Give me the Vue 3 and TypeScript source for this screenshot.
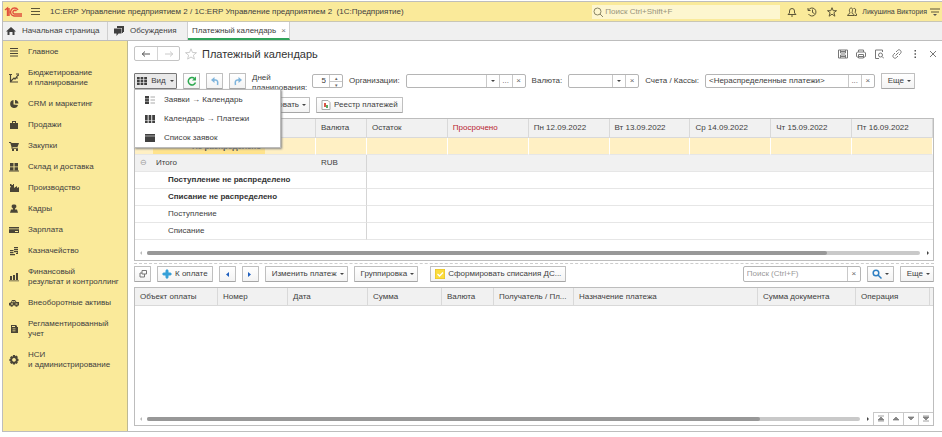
<script setup lang="ts">
import { ref } from 'vue'

interface Section { icon: string; lines: string[] }

const sections: Section[] = [
  { icon: 'M1 1.500h8M1 4h8M1 6.500h8M1 9h8', lines: ['Главное'] },
  { icon: 'M1.500 2v7H9M2 8l3-3 1 1 3-4M0 1.500h3M7 1h3v2M7 5h2', lines: ['Бюджетирование', 'и планирование'] },
  { icon: 'pie', lines: ['CRM и маркетинг'] },
  { icon: 'bag', lines: ['Продажи'] },
  { icon: 'cart', lines: ['Закупки'] },
  { icon: 'boxes', lines: ['Склад и доставка'] },
  { icon: 'factory', lines: ['Производство'] },
  { icon: 'person', lines: ['Кадры'] },
  { icon: 'card', lines: ['Зарплата'] },
  { icon: 'coins', lines: ['Казначейство'] },
  { icon: 'bars', lines: ['Финансовый', 'результат и контроллинг'] },
  { icon: 'car', lines: ['Внеоборотные активы'] },
  { icon: 'book', lines: ['Регламентированный', 'учет'] },
  { icon: 'gear', lines: ['НСИ', 'и администрирование'] },
]

const solid: Record<string, string> = {
  pie: 'M4.500 1A4 4 0 1 0 9 6L4.500 5.500zM6 1v3.500h3.500A4 4 0 0 0 6 1z',
  bag: 'M1 3h2V1h4v2h2v6H1zM4 2v1h2V2z',
  cart: 'M0 1h2l.5 1H10L8.500 6H3.500v.8H9v1H2.500V6L1.300 2H0zM3 8h2v2H3zM7 8h2v2H7z',
  boxes: 'M1 1h3.500v3.500H1zM5.500 1H9v3.500H5.500zM1 5.200h3.500v3H1zM5.500 5.200H9v3H5.500zM0 8.500h10v1H0z',
  factory: 'M1 1h1.500v1H4V1h1v4l3-2v2l2-1v5H1V5l1-2H1z',
  person: 'M5 .5a2 2 0 0 1 1.200 3.800L6 5.500h2L9 8.800H1L2 5.500h2l-.2-1.200A2 2 0 0 1 5 .5z',
  card: 'M0 2h10v1.500H0zM0 4.300h10V8H0zM6 6v1h3V6z',
  coins: 'M5 1h4v1.200H5zM5 3h4v1.200H5zM5 5h4v1.200H5zM1 4h3.500v1.200H1zM1 6h3.500v1.200H1zM1 8h5v1.200H1zM8 6h1v2H7V7h1z',
  bars: 'M1 4h2v4H1zM4 3h2v5H4zM7 1h2v7H7zM0 8.500h10v.8H0z',
  car: 'M3 2h3l1.500 2H10v3.500H8.800a1.300 1.300 0 0 1-2.600 0H4a1.300 1.300 0 0 1-2.600 0H0V5l2-.8zM3.500 3L3 4.300h1.500V3zM5.300 3v1.300h1.200L5.800 3zM2 5.500v1h2v-1zM6.500 5.500v1h2v-1z',
  book: 'M2 1h5l1 1v1h1v6H2zM3 2v1h3V2zM3.500 4.500v.8h3v-.8zM3.500 6.500v.8h3v-.8z',
  gear: 'M4 0h2l.3 1.300 1.200-.7 1.400 1.400-.7 1.200L9.500 4v2l-1.300.4.7 1.200-1.400 1.400-1.200-.7L6 9.600H4l-.4-1.300-1.200.7L1 7.600l.7-1.200L.4 6V4l1.300-.4L1 2.400 2.400 1l1.200.7zM5 3a1.900 1.900 0 1 0 .01 0z',
}

const views = [
  { label: 'Заявки → Календарь', icon: 'list' },
  { label: 'Календарь → Платежи', icon: 'grid' },
  { label: 'Список заявок', icon: 'rows' },
]

const days = ref(5)
const account = ref('<Нераспределенные платежи>')

const planColumns = ['', 'Валюта', 'Остаток', 'Просрочено', 'Пн 12.09.2022', 'Вт 13.09.2022', 'Ср 14.09.2022', 'Чт 15.09.2022', 'Пт 16.09.2022']
const planRows = [
  { label: 'Поступление не распределено', bold: true },
  { label: 'Списание не распределено', bold: true },
  { label: 'Поступление', bold: false },
  { label: 'Списание', bold: false },
]
const payColumns = ['Объект оплаты', 'Номер', 'Дата', 'Сумма', 'Валюта', 'Получатель / Пл...', 'Назначение платежа', 'Сумма документа', 'Операция', '']
const pagers = [
  { name: 'В начало', path: 'M2 2h6M5 3L2 6h6zM2 7h6' },
  { name: 'Вверх', path: 'M5 3L2 6h6z' },
  { name: 'Вниз', path: 'M2 3h6L5 6z' },
  { name: 'В конец', path: 'M2 2h6M2 3h6L5 6zM2 7h6' },
]
</script>

<template>
  <div class="window">
    <header class="titlebar">
      <svg class="logo" viewBox="0 0 18 12" aria-label="1С"><path d="M1 4l2.500-2v8M5 2v8M14 4A4 4 0 1 0 10 10h8M12.500 5A2 2 0 1 0 10 8h8" /></svg>
      <button class="ghost" aria-label="Меню"><svg class="ic" viewBox="0 0 10 10"><path d="M1 1.500h9M1 4.500h9M1 7.500h9" /></svg></button>
      <span class="app-name">1C:ERP Управление предприятием 2 / 1C:ERP Управление предприятием 2 &nbsp;(1С:Предприятие)</span>
      <label class="global-search">
        <svg class="ic" viewBox="0 0 10 10"><circle cx="4.500" cy="4.500" r="3.500" /><path d="M7 7l3 3" /></svg>
        <input type="text" placeholder="Поиск Ctrl+Shift+F" aria-label="Поиск" />
      </label>
      <nav class="top-icons">
        <button class="ghost" aria-label="Уведомления"><svg class="ic" viewBox="0 0 10 10"><path d="M1 7.500h8L7.500 6V4a2.500 2.500 0 0 0-5 0v2zM4 9h2" /></svg></button>
        <button class="ghost" aria-label="История"><svg class="ic" viewBox="0 0 10 10"><path d="M1.500 3A4 4 0 1 1 1.500 7M1 1v2.500h2.500M5.500 2.500V5.500l2 1" /></svg></button>
        <button class="ghost" aria-label="Избранное"><svg class="ic" viewBox="0 0 10 10"><path d="M5 .7l1.200 3h3.300L6.900 5.700l1 3.500L5 7.200 2.100 9.200l1-3.500L.5 3.700h3.300z" /></svg></button>
        <button class="ghost" aria-label="Пользователь"><svg class="ic" viewBox="0 0 10 10"><path d="M.5 8.500C.5 7 3 7 3 6S2 4.500 2.500 2.500s3-2 3 0S5 5 5 6s2.500 1 2.500 2.500zM6.500 1.500c2-.5 2.500 1 2 2.500s-.5 2 1 3v1.500H8" /></svg></button>
      </nav>
      <a class="user" href="#">Ликушина Виктория</a>
      <button class="ghost" aria-label="Настройки"><svg class="ic" viewBox="0 0 10 10"><path d="M0 2h10M1 5h8" /><path class="fill" d="M3 7h4L5 9z" /></svg></button>
    </header>

    <nav class="tabs">
      <a class="tab home" href="#"><svg class="ic dark" viewBox="0 0 10 10"><path class="fill" d="M5 1l5 4.500H8.500V9h-2V6h-3v3h-2V5.500H0z" /></svg>Начальная страница</a>
      <a class="tab talk" href="#"><svg class="ic dark" viewBox="0 0 10 10"><path class="fill" d="M3 0h7v6H9v1H8V2H3zM0 2.500h7.500V7.500H4.500L2.500 10V7.500H0z" /></svg>Обсуждения</a>
      <a class="tab active" href="#">Платежный календарь <span class="x">×</span></a>
    </nav>

    <div class="body">
      <aside class="sidebar">
        <a v-for="s in sections" :key="s.lines[0]" href="#" class="section">
          <svg class="sec-icon" viewBox="0 0 10 10">
            <path v-if="solid[s.icon]" class="solid" fill-rule="evenodd" :d="solid[s.icon]" />
            <path v-else class="line" :d="s.icon" />
          </svg>
          <span><template v-for="(l, i) in s.lines" :key="l"><br v-if="i > 0" />{{ l }}</template></span>
        </a>
      </aside>

      <main class="main">
        <div class="heading">
          <div class="history">
            <button aria-label="Назад"><svg class="ic arrow" viewBox="0 0 10 10"><path d="M1 5h8M4 2.500L1.300 5 4 7.500" /></svg></button>
            <button aria-label="Вперед"><svg class="ic arrow off" viewBox="0 0 10 10"><path d="M1 5h8M6 2.500L8.700 5 6 7.500" /></svg></button>
          </div>
          <svg class="star" viewBox="0 0 12 12"><path d="M6 .8l1.500 3.700 4 .2-3.100 2.500 1 3.900L6 9l-3.400 2.100 1-3.900L.5 4.700l4-.2z" /></svg>
          <h1>Платежный календарь</h1>
          <div class="form-tools">
            <button class="ghost" aria-label="Сохранить"><svg class="ic" viewBox="0 0 10 10"><path d="M.5 1h9v8h-9zM2.500 1v3h5V1M2.500 9V6h5v3M3 2.500h4M3 7.500h4" /></svg></button>
            <button class="ghost" aria-label="Печать"><svg class="ic" viewBox="0 0 10 10"><path d="M2.500 3V1h5v2M2.500 8.500l-2-1V4l1-1h7l1 1v3.500l-2 1M2.500 5.500h5V9h-5zM3 7.500h4" /></svg></button>
            <button class="ghost" aria-label="Просмотр"><svg class="ic" viewBox="0 0 10 10"><path d="M8.500 3V1h-7v8.500H5" /><circle cx="6.500" cy="6" r="2" /><path d="M8 7.500l2 2" /></svg></button>
            <button class="ghost" aria-label="Ссылка"><svg class="ic" viewBox="0 0 10 10"><path d="M4 3l1.500-1.500C7-.5 10.500 2 8.500 4.500L7 6M6 7L4.500 8.500C3 10.500-.5 8 1.500 5.500L3 4M3.500 6.500l3-3" /></svg></button>
            <button class="ghost" aria-label="Действия"><svg class="ic" viewBox="0 0 10 10"><path class="fill" d="M4.500 1h1.500v1.500H4.500zM4.500 4.300h1.500v1.500H4.500zM4.500 7.600h1.500v1.500H4.500z" /></svg></button>
            <button class="ghost" aria-label="Закрыть"><svg class="ic" viewBox="0 0 10 10"><path d="M2 2l6 6M8 2L2 8" /></svg></button>
          </div>
        </div>

        <div class="filters">
          <div class="menu-host">
            <button class="btn view-btn"><svg class="ic dark" viewBox="0 0 10 10"><path class="fill" d="M0 1h2.700v8H0zM3.600 1h2.700v8H3.600zM7.200 1H10v8H7.200z" /><path class="gap" d="M0 3.500h10M0 6.500h10" /></svg>Вид <i class="caret"></i></button>
            <div class="menu" role="menu">
              <button v-for="v in views" :key="v.label" role="menuitem">
                <svg class="ic dark" viewBox="0 0 10 10">
                  <template v-if="v.icon === 'list'"><path class="fill" d="M0 1h4v8H0z" /><path class="faint" d="M5.500 2H10M5.500 5H10M5.500 8H10" /><path class="gap" d="M0 3.700h4M0 6.300h4" /></template>
                  <template v-else-if="v.icon === 'grid'"><path class="fill" d="M0 1h2.700v8H0zM3.600 1h2.700v8H3.600zM7.200 1H10v8H7.200z" /><path class="gap" d="M0 6.500h10" /></template>
                  <template v-else><path class="fill" d="M0 1h10v8H0z" /><path class="faint" d="M0 3h10" /></template>
                </svg>{{ v.label }}
              </button>
            </div>
          </div>
          <button class="btn square" aria-label="Обновить"><svg class="ic green" viewBox="0 0 10 10"><path d="M8.500 6.500A3.700 3.700 0 1 1 7.500 2.500" /><path class="fill" d="M9 .5v4H5z" /></svg></button>
          <button class="btn square" aria-label="Отменить"><svg class="ic blue" viewBox="0 0 10 10"><path d="M3 4h2.500Q8.500 4 7.500 9" /><path class="fill" d="M4.500 1v6L1 4z" /></svg></button>
          <button class="btn square" aria-label="Повторить"><svg class="ic blue" viewBox="0 0 10 10"><path d="M7 4H4.500Q1.500 4 2.500 9" /><path class="fill" d="M5.500 1v6L9 4z" /></svg></button>
          <label class="days-label" for="days">Дней планирования:</label>
          <div class="field days"><input id="days" v-model="days" type="text" /><span class="spin"><button aria-label="Больше">▴</button><button aria-label="Меньше">▾</button></span></div>
          <label for="org">Организации:</label>
          <div class="field org"><input id="org" type="text" /><button aria-label="Список"><i class="caret"></i></button><button aria-label="Выбрать">...</button><button aria-label="Очистить">×</button></div>
          <label for="cur">Валюта:</label>
          <div class="field cur"><input id="cur" type="text" /><button aria-label="Список"><i class="caret"></i></button><button aria-label="Очистить">×</button></div>
          <label for="acc">Счета / Кассы:</label>
          <div class="field acc"><input id="acc" v-model="account" type="text" /><button aria-label="Выбрать">...</button><button aria-label="Очистить">×</button></div>
          <button class="btn">Еще <i class="caret"></i></button>
        </div>

        <div class="actions">
          <button class="btn form-btn">Сформировать <i class="caret"></i></button>
          <button class="btn with-icon"><svg class="ic" viewBox="0 0 10 10"><path class="paper" d="M1 .5h6l2 2v7H1z" /><path class="red" d="M3 3h2v4H3z" /><path class="grn" d="M5 5h2v3H5z" /></svg>Реестр платежей</button>
        </div>

        <section class="panel">
          <table class="plan">
            <colgroup><col class="c-name" /><col class="c-cur" /><col v-for="n in 7" :key="n" /></colgroup>
            <thead><tr><th v-for="(c, i) in planColumns" :key="i" :class="{ overdue: i === 3 }">{{ c }}</th></tr></thead>
            <tbody>
              <tr class="selected"><td><div class="cell-active">Не распределено</div></td><td v-for="n in 8" :key="n"></td></tr>
              <tr class="total"><td><span class="fold">⊖</span>Итого</td><td class="edge">RUB</td><td colspan="7"></td></tr>
              <tr v-for="r in planRows" :key="r.label"><td class="child" :class="{ bold: r.bold }">{{ r.label }}</td><td class="edge"></td><td colspan="7"></td></tr>
            </tbody>
          </table>
          <div class="scroll"><i class="tri left"></i><div class="track"><div class="thumb wide"></div></div><i class="tri right"></i></div>
        </section>

        <div class="splitter"></div>

        <div class="pay-tools">
          <button class="btn square" aria-label="Открыть"><svg class="ic open" viewBox="0 0 10 10"><path d="M4 1.500h4.500v3.500H4zM4 4H2v4h4.500V5" /></svg></button>
          <button class="btn with-icon"><svg class="ic sky" viewBox="0 0 10 10"><path class="fill" d="M3.500 1.500L5 0l1.500 1.500v2h2L10 5 8.500 6.500h-2v2L5 10 3.500 8.500v-2h-2L0 5l1.500-1.500h2z" /></svg>К оплате</button>
          <button class="btn square" aria-label="Назад"><svg class="ic navy" viewBox="0 0 10 10"><path class="fill" d="M7 3v5L4 5.500z" /></svg></button>
          <button class="btn square" aria-label="Вперед"><svg class="ic navy" viewBox="0 0 10 10"><path class="fill" d="M3 3v5l3-2.500z" /></svg></button>
          <button class="btn">Изменить платеж <i class="caret"></i></button>
          <button class="btn">Группировка <i class="caret"></i></button>
          <button class="btn with-icon make"><svg class="ic" viewBox="0 0 10 10"><path class="yellow" d="M0 0h10v10H0z" /><path class="check" d="M2.500 5l2 2 3.500-3.500" /></svg>Сформировать списания ДС...</button>
          <div class="field find"><input type="text" placeholder="Поиск (Ctrl+F)" aria-label="Поиск платежа" /><button aria-label="Очистить">×</button></div>
          <button class="btn with-icon" aria-label="Найти"><svg class="ic lens" viewBox="0 0 10 10"><circle cx="4" cy="4" r="2.800" /><path d="M6 6l3.500 3.500" /></svg><i class="caret"></i></button>
          <button class="btn">Еще <i class="caret"></i></button>
        </div>

        <section class="panel pay-panel">
          <table class="pay">
            <colgroup><col v-for="(c, i) in payColumns" :key="i" :class="'p' + i" /></colgroup>
            <thead><tr><th v-for="(c, i) in payColumns" :key="i">{{ c }}</th></tr></thead>
          </table>
          <div class="pay-foot">
            <div class="scroll"><i class="tri left"></i><div class="track"><div class="thumb"></div></div><i class="tri right"></i></div>
            <div class="pager"><button v-for="p in pagers" :key="p.name" :aria-label="p.name"><svg class="ic" viewBox="0 0 10 10"><path :d="p.path" /></svg></button></div>
          </div>
        </section>
      </main>
    </div>
  </div>
</template>

<style>
body { margin: 0; background: #fff; }
</style>

<style scoped>
.window, .window * { box-sizing: border-box; }
.window {
  font: 8px/10px "Liberation Sans", Arial, sans-serif;
  color: #404040;
  display: flex;
  flex-direction: column;
  min-height: calc(100vh - 6px);
  margin: 1px 0 5px 2px;
  border: 1px solid #bdbdbd;
  border-right: 0;
}
button, input { font: inherit; color: inherit; margin: 0; padding: 0; border: 0; background: none; }
input { min-width: 0; outline: 0; }
a { color: inherit; text-decoration: none; }
.ic { width: 10px; height: 10px; flex: none; display: block; fill: none; stroke: #555; stroke-width: 1; }
.ic .fill { fill: #555; stroke: none; }
.dark .fill { fill: #404040; }
.ic .gap { stroke: #fff; stroke-width: 0.5; }
.ic .faint { stroke: #aaa; }
.ghost { display: flex; align-items: center; justify-content: center; }
.caret { display: inline-block; border: 2px solid transparent; border-top-color: #444; border-bottom: 0; vertical-align: middle; }

.titlebar { display: flex; align-items: center; height: 20px; background: #faea9a; border-bottom: 1px solid #c9c6b4; padding: 0 2px 0 1px; }
.titlebar .ic { stroke: #5e5738; }
.logo { width: 18px; height: 12px; fill: none; stroke: #e0503c; stroke-width: 1.4; margin-right: 8px; }
.app-name { margin-left: 10px; flex: 1; white-space: nowrap; }
.global-search { display: flex; align-items: center; gap: 2px; width: 188px; height: 14px; padding-left: 1px; background: #fdf6cf; }
.global-search input { flex: 1; }
.titlebar .global-search .ic { stroke: #8b8665; }
input::placeholder { color: #98947c; opacity: 1; }
.top-icons { display: flex; gap: 10px; margin-left: 7px; }
.user { font-size: 7px; margin: 0 3px 0 5px; white-space: nowrap; }

.tabs { display: flex; height: 19px; background: #f0f0f0; border-bottom: 1px solid #bdbdbd; }
.tab { display: flex; align-items: center; gap: 6px; border-right: 1px solid #cfcfcf; white-space: nowrap; }
.home { width: 105px; padding-left: 3px; }
.talk { width: 80px; padding-left: 6px; }
.active { background: #fff; padding: 2px 3px 0 4px; border-bottom: 2px solid #2fa35a; gap: 5px; }
.x { color: #777; }

.body { display: flex; flex: 1; }
.sidebar { width: 125px; flex: none; background: #faea9a; border-right: 1px solid #bdb994; padding: 0 0 0 6px; }
.section { display: flex; align-items: center; gap: 9px; padding: 6px 0 5px; white-space: nowrap; }
.sec-icon { width: 10px; height: 10px; flex: none; }
.solid { fill: #4a4536; }
.line { fill: none; stroke: #4a4536; stroke-width: 1.2; }

.main { flex: 1; min-width: 0; display: flex; flex-direction: column; padding: 5px 8px 5px 6px; }
.heading { display: flex; align-items: center; height: 15px; }
.history { display: flex; border: 1px solid #c4c4c4; border-radius: 2px; height: 15px; }
.history button { width: 22px; display: flex; align-items: center; justify-content: center; }
.history button + button { border-left: 1px solid #d4d4d4; }
.off { opacity: 0.3; }
.star { width: 12px; height: 12px; margin: 0 5px; fill: none; stroke: #ccc; }
h1 { font-size: 11px; line-height: 14px; font-weight: 400; margin: 0; color: #333; }
.form-tools { display: flex; gap: 8px; margin: 0 -4px 0 auto; }
.form-tools .ic { stroke: #777; }

.filters { display: flex; align-items: center; gap: 6px; margin-top: 12px; height: 16px; padding-right: 19px; }
.btn { display: flex; align-items: center; justify-content: center; gap: 3px; height: 16px; padding: 0 3px 0 6px; border: 1px solid #bfbfbf; border-bottom-color: #a6a6a6; border-radius: 1px; background: linear-gradient(#fff, #f3f3f3); white-space: nowrap; }
.with-icon { padding: 0 4px; }
.square { width: 17px; padding: 0; }
.menu-host { position: relative; flex: none; }
.view-btn { width: 43px; padding: 0 3px; gap: 4px; background: #e9e9e9; border-color: #777; }
.menu { position: absolute; z-index: 2; top: 16px; left: 0; width: 147px; background: #fff; border: 1px solid #bbb; box-shadow: 1px 1px 2px #888; }
.menu button { display: flex; align-items: center; gap: 9px; width: 100%; height: 19px; padding: 0 10px; white-space: nowrap; }
.green { stroke: #2da84f; stroke-width: 1.5; }
.green .fill { fill: #2da84f; }
.blue { stroke: #7eb4dc; stroke-width: 1.5; }
.blue .fill { fill: #7eb4dc; }
.field { display: flex; height: 14px; border: 1px solid #b5b5b5; border-radius: 2px; background: #fff; }
.field input { flex: 1; padding-left: 3px; }
.field button { width: 13px; flex: none; border-left: 1px solid #c9c9c9; display: flex; align-items: center; justify-content: center; color: #666; }
.days { width: 31px; }
.days input { text-align: right; padding-right: 3px; }
.spin { display: flex; flex-direction: column; }
.spin button { height: 6px; font-size: 5px; line-height: 6px; }
.spin button + button { border-top: 1px solid #c9c9c9; }
.filters label { flex: none; white-space: nowrap; }
.filters .days-label { width: 54px; height: 16px; white-space: normal; }
.org { width: 120px; }
.cur { width: 71px; }
.acc { flex: 1; }

.actions { display: flex; gap: 6px; margin-top: 8px; }
.form-btn { width: 176px; justify-content: flex-end; }
.paper { fill: #fff; stroke: #aaa; }
.red { fill: #dd5548; stroke: none; }
.grn { fill: #5aa865; stroke: none; }

.panel { border: 1px solid #bdbdbd; margin-top: 5px; background: #fff; }
table { width: 100%; table-layout: fixed; border-collapse: separate; border-spacing: 0; }
th, td { padding: 0 5px; text-align: left; font-weight: 400; white-space: nowrap; overflow: hidden; }
th { height: 18px; background: #f1f1f1; border-right: 1px solid #d9d9d9; border-bottom: 1px solid #d9d9d9; }
.plan th { height: 19px; }
td { height: 17px; border-bottom: 1px solid #e6e6e6; }
.c-name { width: 181px; }
.c-cur { width: 51px; }
.overdue { color: #b8232f; }
.selected td { background: #fff0c4; border-right: 1px solid #fff; padding: 0; }
.cell-active { width: 112px; height: 16px; margin-left: 18px; padding: 4px 0 0 39px; background: #ffe38c; font-weight: 700; }
.total td { background: #f1f1f1; }
.fold { display: inline-block; width: 16px; color: #999; }
.child { padding-left: 33px; }
.bold { font-weight: 700; color: #333; }
.edge { border-right: 1px solid #d5d5d5; }
.scroll { display: flex; align-items: center; gap: 5px; height: 13px; padding: 0 4px 0 5px; flex: 1; }
.plan + .scroll { margin-top: 5px; height: 15px; }
.track { flex: 1; height: 4px; border-radius: 2px; background: #c9c9c9; }
.thumb { width: 86%; height: 4px; border-radius: 2px; background: #989898; }
.wide { width: 88%; }
.tri { border: 2px solid transparent; }
.left { border-right-color: #bbb; border-left: 0; }
.right { border-left-color: #444; border-right: 0; margin-left: 2px; }
.splitter { border-top: 1px dashed #ccc; margin-top: 2px; }

.pay-tools { display: flex; align-items: center; gap: 6px; margin-top: 2px; }
.make { margin-left: 6px; }
.find { width: 118px; height: 16px; margin-left: auto; }
.find input::placeholder { color: #999; }
.open { stroke: #777; }
.sky .fill { fill: #36a0d8; }
.navy .fill { fill: #1f5fbf; }
.lens { stroke: #2e7fc2; stroke-width: 1.5; }
.yellow { fill: #fbdc3c; stroke: #e0bc2a; }
.check { stroke: #fff; stroke-width: 1.3; }
.pay-panel { flex: 1; display: flex; flex-direction: column; }
.p0 { width: 83px; }
.p1 { width: 70px; }
.p2 { width: 80px; }
.p3 { width: 74px; }
.p4 { width: 52px; }
.p5 { width: 80px; }
.p7 { width: 98px; }
.p8 { width: 74px; }
.p9 { width: 3px; }
.pay th:last-child { padding: 0; border-right: 0; }
.pay-foot { display: flex; margin-top: auto; }
.pager { display: flex; border-top: 1px solid #c9c9c9; }
.pager button { width: 15px; height: 12px; border-left: 1px solid #c9c9c9; display: flex; align-items: center; justify-content: center; }
.pager .ic { stroke: #777; fill: #888; stroke-width: 0.7; }
</style>
